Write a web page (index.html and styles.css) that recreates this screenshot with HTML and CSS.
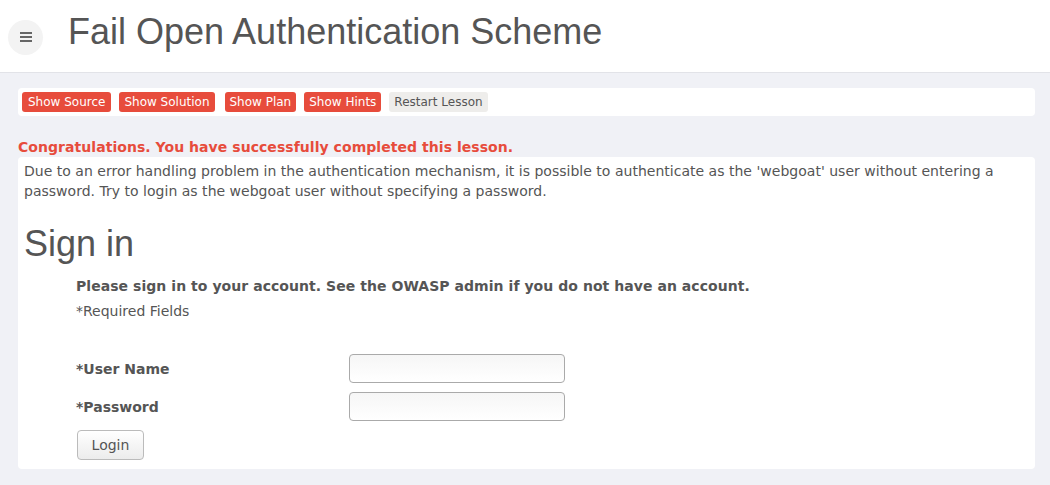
FILE: index.html
```html
<!DOCTYPE html>
<html>
<head>
<meta charset="utf-8">
<link rel="stylesheet" href="styles.css">
</head>
<body>
<header class="topbar">
  <button class="menu-toggle" aria-label="menu">
    <span class="bar"></span><span class="bar"></span><span class="bar"></span>
  </button>
  <h1 class="page-title">Fail Open Authentication Scheme</h1>
</header>
<main class="main">
  <div class="lesson-buttons">
    <button class="btn btn-red btn-wide">Show Source</button>
    <button class="btn btn-red">Show Solution</button>
    <button class="btn btn-red btn-gap">Show Plan</button>
    <button class="btn btn-red">Show Hints</button>
    <button class="btn btn-grey">Restart Lesson</button>
  </div>
  <div class="success">Congratulations. You have successfully completed this lesson.</div>
  <div class="content">
    <p class="intro">Due to an error handling problem in the authentication mechanism, it is possible to authenticate as the 'webgoat' user without entering a password. Try to login as the webgoat user without specifying a password.</p>
    <h2 class="signin-title">Sign in</h2>
    <div class="form-area">
      <p class="form-lead">Please sign in to your account. See the OWASP admin if you do not have an account.</p>
      <p class="required">*Required Fields</p>
      <div class="form-grid">
        <label class="field-label">*User Name</label>
        <input class="field-input" type="text">
        <label class="field-label">*Password</label>
        <input class="field-input" type="password">
      </div>
      <button class="login-btn">Login</button>
    </div>
  </div>
</main>
</body>
</html>
```
FILE: styles.css
```css
* { box-sizing: border-box; }
html, body {
  margin: 0;
  padding: 0;
  background: #f0f1f6;
  font-family: "DejaVu Sans", sans-serif;
  color: #555;
}
.topbar {
  background: #fff;
  height: 73px;
  border-bottom: 1px solid #e2e3e8;
  display: flex;
  align-items: center;
}
.menu-toggle {
  width: 35px;
  height: 35px;
  border-radius: 50%;
  background: #f3f3f3;
  border: none;
  margin: 2px 0 0 8px;
  padding: 0;
  display: flex;
  flex-direction: column;
  align-items: center;
  justify-content: center;
  gap: 2px;
}
.menu-toggle .bar {
  display: block;
  width: 12px;
  height: 2px;
  background: #666;
}
.page-title {
  margin: 0 0 8px 25px;
  font-family: "Liberation Sans", Arial, sans-serif;
  font-weight: normal;
  font-size: 36px;
  color: #555;
}
.main {
  padding: 15px 15px 0 18px;
}
.lesson-buttons {
  background: #fff;
  border-radius: 4px;
  height: 28px;
  padding: 4px 4px;
  display: flex;
  gap: 8px;
}
.btn {
  height: 20px;
  border: none;
  border-radius: 3px;
  font-family: "DejaVu Sans", sans-serif;
  font-size: 12px;
  padding: 0 5px;
  line-height: 20px;
}
.btn-wide { padding: 0 6px; }
.btn-red { background: #e74c3c; color: #fff; }
.btn-grey { background: #eeedeb; color: #555; }
.btn-gap { margin-left: 2px; }
.success {
  margin-top: 23px;
  color: #e74c3c;
  font-weight: bold;
  font-size: 14px;
  line-height: 16px;
  height: 18px;
  letter-spacing: 0.05px;
}
.content {
  background: #fff;
  border-radius: 4px;
  padding: 4px 6px 9px 6px;
}
.intro {
  margin: 0;
  font-size: 14px;
  line-height: 20px;
  letter-spacing: 0.015px;
}
.signin-title {
  margin: 23px 0 0;
  font-family: "Liberation Sans", Arial, sans-serif;
  font-weight: normal;
  font-size: 36px;
  line-height: 40px;
  color: #555;
}
.form-area {
  padding-left: 52px;
}
.form-lead {
  margin: 12px 0 0;
  font-weight: bold;
  font-size: 14px;
  line-height: 20px;
  letter-spacing: 0.05px;
}
.required {
  margin: 5px 0 0;
  font-size: 14px;
  line-height: 20px;
}
.form-grid {
  margin-top: 33px;
  display: grid;
  grid-template-columns: 273px 216px;
  row-gap: 9px;
  align-items: center;
}
.field-label {
  font-weight: bold;
  font-size: 14px;
}
.field-input {
  width: 216px;
  height: 29px;
  border: 1px solid #aaa;
  border-radius: 4px;
  background: linear-gradient(#f6f6f6, #fff);
}
.login-btn {
  margin-top: 9px;
  margin-left: 1px;
  width: 67px;
  height: 30px;
  border: 1px solid #bbb;
  border-radius: 4px;
  background: linear-gradient(#fff, #ececec);
  font-family: "DejaVu Sans", sans-serif;
  font-size: 14px;
  color: #555;
}
```
